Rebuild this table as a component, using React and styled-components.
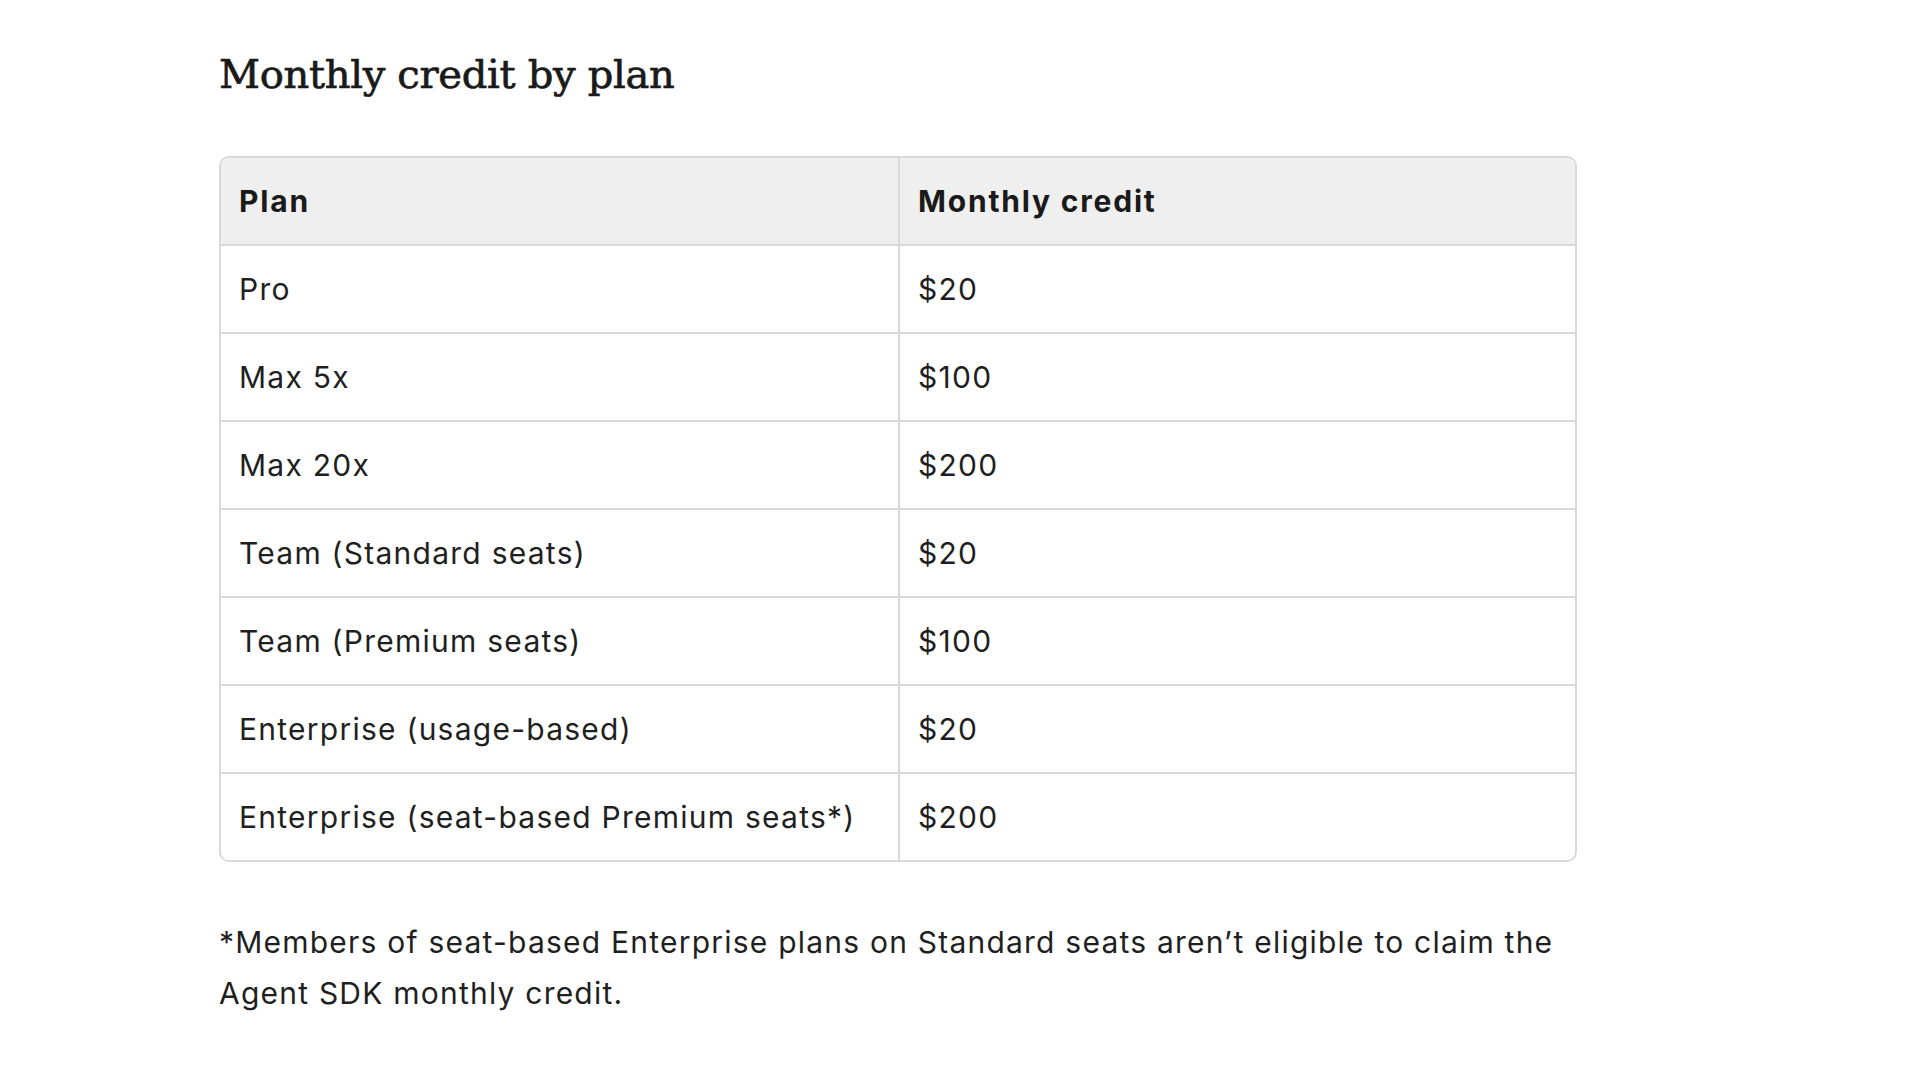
import React from "react";
import styled, { createGlobalStyle } from "styled-components";

const GlobalStyle = createGlobalStyle`
  html, body {
    margin: 0;
    padding: 0;
    background: #ffffff;
  }
  body {
    font-family: Inter, "Noto Sans", "Liberation Sans", sans-serif;
    color: #1f1f1f;
  }
`;

const Page = styled.main`
  padding: 50px 0 40px 219px;
`;

const Article = styled.section`
  width: 1358px;
  display: flex;
  flex-direction: column;
`;

const Heading = styled.h2`
  margin: 0;
  font-family: "DejaVu Serif", "Liberation Serif", serif;
  font-weight: 400;
  font-size: 40px;
  line-height: 48px;
  letter-spacing: -0.3px;
  color: #1a1a1a;
  -webkit-text-stroke: 0.7px #1a1a1a;
`;

const TableFrame = styled.div`
  margin-top: 58px;
  border: 2px solid #d9d9d9;
  border-radius: 10px;
  overflow: hidden;
`;

const Row = styled.div`
  display: grid;
  grid-template-columns: 1fr 1fr;
  background: ${(p) => (p.$head ? "#efefef" : "#ffffff")};
  border-top: ${(p) => (p.$first ? "none" : "2px solid #d9d9d9")};
`;

const Cell = styled.div`
  padding: 25px 18px;
  font-size: 30px;
  line-height: 36px;
  font-weight: ${(p) => (p.$head ? 700 : 400)};
  letter-spacing: ${(p) => (p.$head ? "1.8px" : "1.25px")};
  color: ${(p) => (p.$head ? "#1a1a1a" : "#1f1f1f")};
  border-left: ${(p) => (p.$second ? "2px solid #d9d9d9" : "none")};
  white-space: nowrap;
`;

const Footnote = styled.p`
  margin: 55px 0 0;
  font-size: 30px;
  line-height: 51px;
  letter-spacing: 1.22px;
  color: #1f1f1f;
`;

const rows = [
  ["Pro", "$20"],
  ["Max 5x", "$100"],
  ["Max 20x", "$200"],
  ["Team (Standard seats)", "$20"],
  ["Team (Premium seats)", "$100"],
  ["Enterprise (usage-based)", "$20"],
  ["Enterprise (seat-based Premium seats*)", "$200"],
];

export default function App() {
  return (
    <>
      <GlobalStyle />
      <Page>
        <Article>
          <Heading>Monthly credit by plan</Heading>
          <TableFrame>
            <Row $head $first>
              <Cell $head>Plan</Cell>
              <Cell $head $second>Monthly credit</Cell>
            </Row>
            {rows.map(([plan, credit]) => (
              <Row key={plan}>
                <Cell>{plan}</Cell>
                <Cell $second>{credit}</Cell>
              </Row>
            ))}
          </TableFrame>
          <Footnote>
            *Members of seat-based Enterprise plans on Standard seats aren’t
            eligible to claim the Agent SDK monthly credit.
          </Footnote>
        </Article>
      </Page>
    </>
  );
}
